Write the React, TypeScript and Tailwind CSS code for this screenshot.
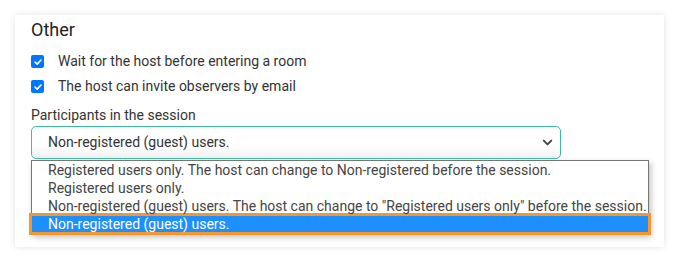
import { ChevronDown } from "lucide-react";

const OPTIONS = [
  "Registered users only. The host can change to Non-registered before the session.",
  "Registered users only.",
  'Non-registered (guest) users. The host can change to "Registered users only" before the session.',
  "Non-registered (guest) users.",
];

function Check({ label }: { label: string }) {
  return (
    <label className="flex items-center gap-[14px] h-[25px]">
      <span className="flex h-[13px] w-[13px] items-center justify-center rounded-[2px] bg-[#0075ff]">
        <svg viewBox="0 0 12 12" className="h-[10px] w-[10px]">
          <path d="M2.5 6.2 L5 8.6 L9.6 3.6" fill="none" stroke="white" strokeWidth="2" strokeLinecap="round" strokeLinejoin="round" />
        </svg>
      </span>
      <span className="text-[14px] text-[#333]">{label}</span>
    </label>
  );
}

export default function App() {
  return (
    <div className="h-[263px] w-[679px] bg-white pl-[15px] pt-[15px] font-['Roboto',sans-serif]">
      <div className="relative h-[232px] w-[649px] bg-white px-[16px] pt-[3px] shadow-[0_0_6px_rgba(0,0,0,0.12)]">
        <h2 className="text-[18px] leading-[24px] text-[#222]">Other</h2>
        <div className="mt-[7px]">
          <Check label="Wait for the host before entering a room" />
          <Check label="The host can invite observers by email" />
        </div>
        <p className="mt-[6px] text-[14px] leading-[20px] text-[#333]">Participants in the session</p>
        <div className="mt-[1px] flex h-[33px] w-[530px] items-center justify-between rounded-[5px] border border-[#3cbf9f] bg-gradient-to-b from-white from-60% to-[#f1f1f1] pl-[16px] pr-[5px] text-[14px] text-[#333]">
          <span>Non-registered (guest) users.</span>
          <ChevronDown className="h-[15px] w-[15px] text-[#444]" strokeWidth={3.2} />
        </div>

        {/* open dropdown list */}
        <div className="absolute left-[16px] top-[145px] w-[618px] border border-[#767676] bg-white pt-[1px] shadow-[2px_3px_6px_rgba(0,0,0,0.25)]">
          {OPTIONS.map((o, i) =>
            i === OPTIONS.length - 1 ? (
              <div
                key={o}
                className="-mx-[3px] -mt-[3px] -mb-[2px] border-[3px] border-[#f7962b] bg-[#1e8fff] pl-[16px] text-[14px] leading-[16px] text-white"
              >
                {o}
              </div>
            ) : (
              <div key={o} className="h-[18px] pl-[16px] text-[14px] leading-[17px] text-[#444] whitespace-nowrap">
                {o}
              </div>
            )
          )}
        </div>
      </div>
    </div>
  );
}
